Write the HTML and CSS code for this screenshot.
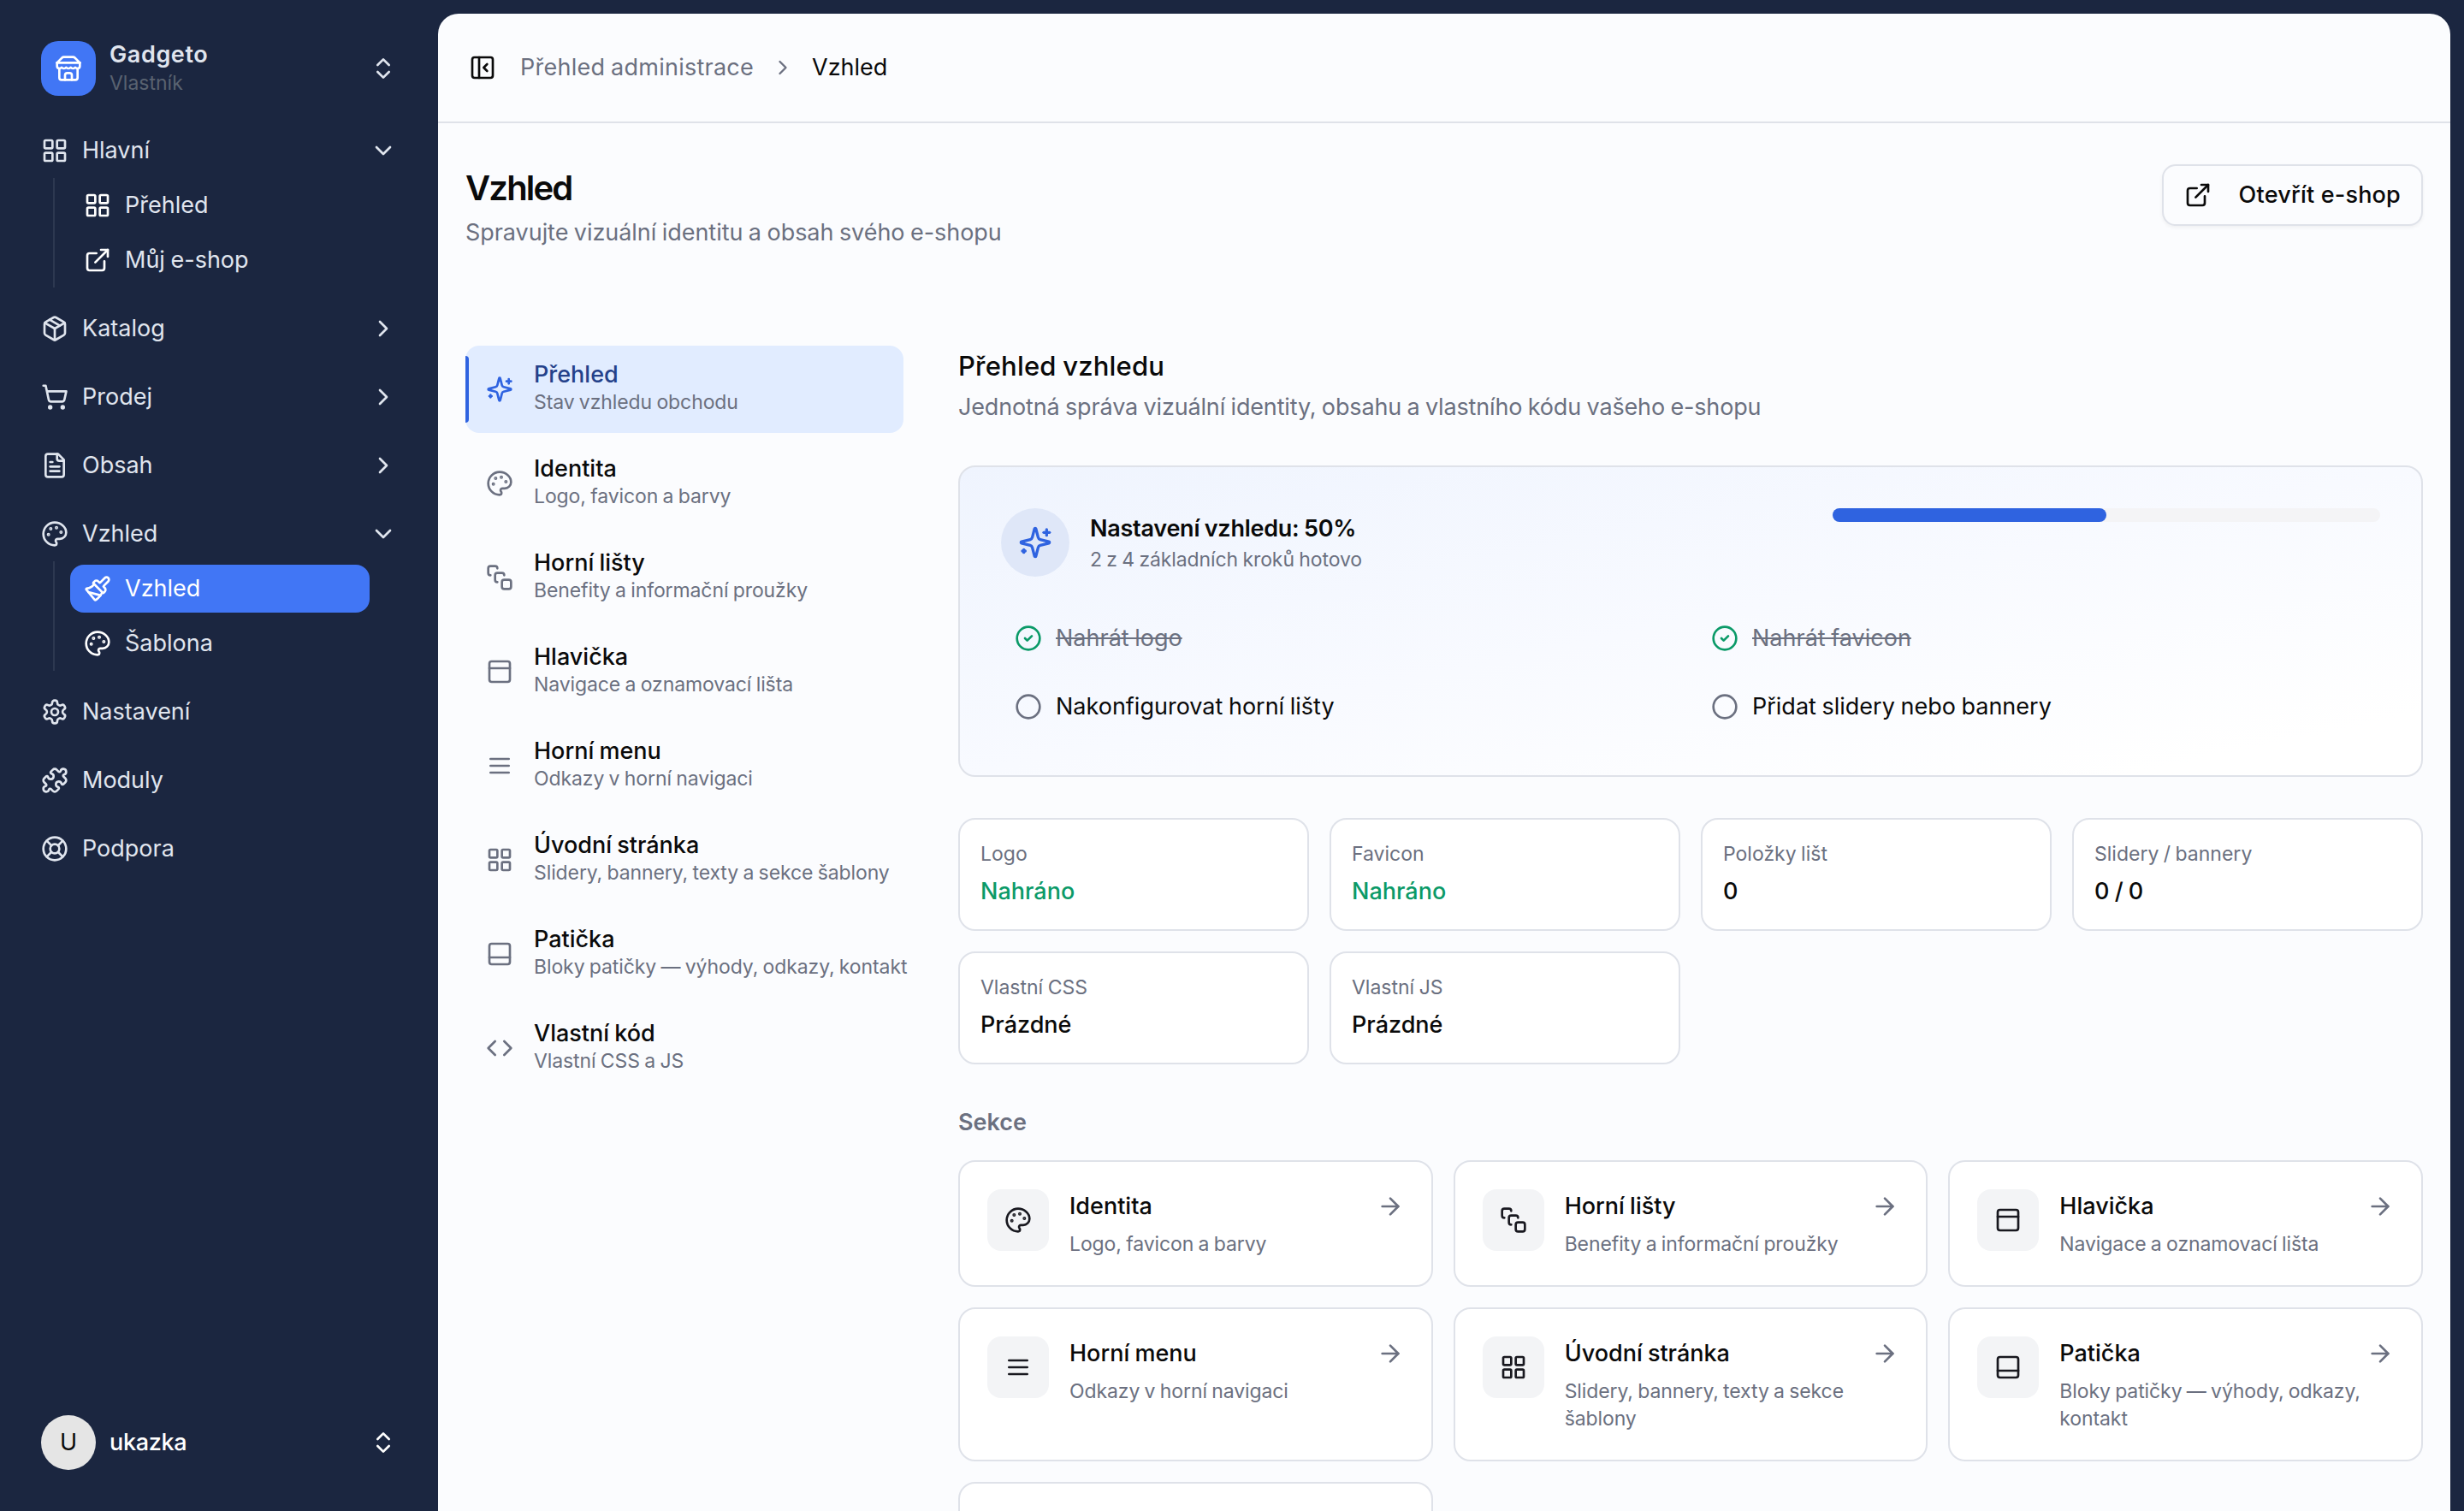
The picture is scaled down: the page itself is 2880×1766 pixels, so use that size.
FILE: index.html
```
<!DOCTYPE html>
<html lang="cs">
<head>
  <meta charset="UTF-8">
  <title>Vzhled | Gadgeto</title>
  <link rel="stylesheet" href="styles.css">
</head>
<body>

  <!-- Icon sprite -->
  <svg class="sprite" aria-hidden="true">
    <symbol id="i-store" viewBox="0 0 24 24"><path d="m2 7 4.41-4.41A2 2 0 0 1 7.83 2h8.34a2 2 0 0 1 1.42.59L22 7"/><path d="M4 12v8a2 2 0 0 0 2 2h12a2 2 0 0 0 2-2v-8"/><path d="M15 22v-4a2 2 0 0 0-2-2h-2a2 2 0 0 0-2 2v4"/><path d="M2 7h20"/><path d="M22 7v3a2 2 0 0 1-2 2a2.7 2.7 0 0 1-1.59-.63.7.7 0 0 0-.82 0A2.7 2.7 0 0 1 16 12a2.7 2.7 0 0 1-1.59-.63.7.7 0 0 0-.82 0A2.7 2.7 0 0 1 12 12a2.7 2.7 0 0 1-1.59-.63.7.7 0 0 0-.82 0A2.7 2.7 0 0 1 8 12a2.7 2.7 0 0 1-1.59-.63.7.7 0 0 0-.82 0A2.7 2.7 0 0 1 4 12a2 2 0 0 1-2-2V7"/></symbol>
    <symbol id="i-updown" viewBox="0 0 24 24"><path d="m7 15 5 5 5-5"/><path d="m7 9 5-5 5 5"/></symbol>
    <symbol id="i-down" viewBox="0 0 24 24"><path d="m6 9 6 6 6-6"/></symbol>
    <symbol id="i-right" viewBox="0 0 24 24"><path d="m9 18 6-6-6-6"/></symbol>
    <symbol id="i-arrow" viewBox="0 0 24 24"><path d="M5 12h14"/><path d="m12 5 7 7-7 7"/></symbol>
    <symbol id="i-grid" viewBox="0 0 24 24"><rect width="7" height="7" x="3" y="3" rx="1"/><rect width="7" height="7" x="14" y="3" rx="1"/><rect width="7" height="7" x="14" y="14" rx="1"/><rect width="7" height="7" x="3" y="14" rx="1"/></symbol>
    <symbol id="i-external" viewBox="0 0 24 24"><path d="M15 3h6v6"/><path d="M10 14 21 3"/><path d="M18 13v6a2 2 0 0 1-2 2H5a2 2 0 0 1-2-2V8a2 2 0 0 1 2-2h6"/></symbol>
    <symbol id="i-package" viewBox="0 0 24 24"><path d="M11 21.73a2 2 0 0 0 2 0l7-4A2 2 0 0 0 21 16V8a2 2 0 0 0-1-1.73l-7-4a2 2 0 0 0-2 0l-7 4A2 2 0 0 0 3 8v8a2 2 0 0 0 1 1.73z"/><path d="M12 22V12"/><path d="M3.3 7 12 12l8.7-5"/><path d="m7.5 4.27 9 5.15"/></symbol>
    <symbol id="i-cart" viewBox="0 0 24 24"><circle cx="8" cy="21" r="1"/><circle cx="19" cy="21" r="1"/><path d="M2.05 2.05h2l2.66 12.42a2 2 0 0 0 2 1.58h9.78a2 2 0 0 0 1.95-1.57l1.65-7.43H5.12"/></symbol>
    <symbol id="i-file" viewBox="0 0 24 24"><path d="M15 2H6a2 2 0 0 0-2 2v16a2 2 0 0 0 2 2h12a2 2 0 0 0 2-2V7Z"/><path d="M14 2v4a2 2 0 0 0 2 2h4"/><path d="M10 9H8"/><path d="M16 13H8"/><path d="M16 17H8"/></symbol>
    <symbol id="i-palette" viewBox="0 0 24 24"><circle class="dot" cx="13.5" cy="6.5" r=".5"/><circle class="dot" cx="17.5" cy="10.5" r=".5"/><circle class="dot" cx="8.5" cy="7.5" r=".5"/><circle class="dot" cx="6.5" cy="12.5" r=".5"/><path d="M12 2C6.5 2 2 6.5 2 12s4.5 10 10 10c.926 0 1.648-.746 1.648-1.688 0-.437-.18-.835-.437-1.125-.29-.289-.438-.652-.438-1.125a1.64 1.64 0 0 1 1.668-1.668h1.996c3.051 0 5.555-2.503 5.555-5.554C21.965 6.012 17.461 2 12 2z"/></symbol>
    <symbol id="i-brush" viewBox="0 0 24 24"><path d="m14.622 17.897-10.68-2.913"/><path d="M18.376 2.622a1 1 0 1 1 3.002 3.002L17.36 9.643a.5.5 0 0 0 0 .707l.944.944a2.41 2.41 0 0 1 0 3.408l-.944.944a.5.5 0 0 1-.707 0L8.354 7.348a.5.5 0 0 1 0-.707l.944-.944a2.41 2.41 0 0 1 3.408 0l.944.944a.5.5 0 0 0 .707 0z"/><path d="M9 8c-1.804 2.71-3.97 3.46-6.583 3.948a.507.507 0 0 0-.302.819l7.32 8.883a1 1 0 0 0 1.185.204C12.735 20.405 16 16.792 16 15"/></symbol>
    <symbol id="i-settings" viewBox="0 0 24 24"><path d="M12.22 2h-.44a2 2 0 0 0-2 2v.18a2 2 0 0 1-1 1.73l-.43.25a2 2 0 0 1-2 0l-.15-.08a2 2 0 0 0-2.73.73l-.22.38a2 2 0 0 0 .73 2.73l.15.1a2 2 0 0 1 1 1.72v.51a2 2 0 0 1-1 1.74l-.15.09a2 2 0 0 0-.73 2.73l.22.38a2 2 0 0 0 2.73.73l.15-.08a2 2 0 0 1 2 0l.43.25a2 2 0 0 1 1 1.73V20a2 2 0 0 0 2 2h.44a2 2 0 0 0 2-2v-.18a2 2 0 0 1 1-1.73l.43-.25a2 2 0 0 1 2 0l.15.08a2 2 0 0 0 2.73-.73l.22-.39a2 2 0 0 0-.73-2.73l-.15-.08a2 2 0 0 1-1-1.74v-.5a2 2 0 0 1 1-1.74l.15-.09a2 2 0 0 0 .73-2.73l-.22-.38a2 2 0 0 0-2.73-.73l-.15.08a2 2 0 0 1-2 0l-.43-.25a2 2 0 0 1-1-1.73V4a2 2 0 0 0-2-2z"/><circle cx="12" cy="12" r="3"/></symbol>
    <symbol id="i-puzzle" viewBox="0 0 24 24"><path d="M15.39 4.39a1 1 0 0 0 1.68-.474 2.5 2.5 0 1 1 3.014 3.015 1 1 0 0 0-.474 1.68l1.683 1.682a2.414 2.414 0 0 1 0 3.414L19.61 15.39a1 1 0 0 1-1.68-.474 2.5 2.5 0 1 0-3.014 3.015 1 1 0 0 1 .474 1.68l-1.683 1.682a2.414 2.414 0 0 1-3.414 0L8.61 19.61a1 1 0 0 0-1.68.474 2.5 2.5 0 1 1-3.014-3.015 1 1 0 0 0 .474-1.68l-1.683-1.682a2.414 2.414 0 0 1 0-3.414L4.39 8.61a1 1 0 0 1 1.68.474 2.5 2.5 0 1 0 3.014-3.015 1 1 0 0 1-.474-1.68l1.683-1.682a2.414 2.414 0 0 1 3.414 0z"/></symbol>
    <symbol id="i-buoy" viewBox="0 0 24 24"><circle cx="12" cy="12" r="10"/><path d="m4.93 4.93 4.24 4.24"/><path d="m14.83 9.17 4.24-4.24"/><path d="m14.83 14.83 4.24 4.24"/><path d="m9.17 14.83-4.24 4.24"/><circle cx="12" cy="12" r="4"/></symbol>
    <symbol id="i-panel-left" viewBox="0 0 24 24"><rect width="18" height="18" x="3" y="3" rx="2"/><path d="M9 3v18"/><path d="m16 15-3-3 3-3"/></symbol>
    <symbol id="i-sparkles" viewBox="0 0 24 24"><path d="M9.937 15.5A2 2 0 0 0 8.5 14.063l-6.135-1.582a.5.5 0 0 1 0-.962L8.5 9.936A2 2 0 0 0 9.937 8.5l1.582-6.135a.5.5 0 0 1 .963 0L14.063 8.5A2 2 0 0 0 15.5 9.937l6.135 1.581a.5.5 0 0 1 0 .964L15.5 14.063a2 2 0 0 0-1.437 1.437l-1.582 6.135a.5.5 0 0 1-.963 0z"/><path d="M20 3v4"/><path d="M22 5h-4"/><path d="M4 17v2"/><path d="M5 18H3"/></symbol>
    <symbol id="i-stack" viewBox="0 0 24 24"><path d="M4 10c-1.1 0-2-.9-2-2V4c0-1.1.9-2 2-2h4c1.1 0 2 .9 2 2"/><path d="M10 16c-1.1 0-2-.9-2-2v-4c0-1.1.9-2 2-2h4c1.1 0 2 .9 2 2"/><rect width="8" height="8" x="14" y="14" rx="2"/></symbol>
    <symbol id="i-panel-top" viewBox="0 0 24 24"><rect width="18" height="18" x="3" y="3" rx="2"/><path d="M3 9h18"/></symbol>
    <symbol id="i-panel-bottom" viewBox="0 0 24 24"><rect width="18" height="18" x="3" y="3" rx="2"/><path d="M3 15h18"/></symbol>
    <symbol id="i-menu" viewBox="0 0 24 24"><path d="M4 6h16"/><path d="M4 12h16"/><path d="M4 18h16"/></symbol>
    <symbol id="i-code" viewBox="0 0 24 24"><path d="m16 18 6-6-6-6"/><path d="m8 6-6 6 6 6"/></symbol>
    <symbol id="i-check" viewBox="0 0 24 24"><circle cx="12" cy="12" r="10"/><path d="m9 12 2 2 4-4"/></symbol>
    <symbol id="i-circle" viewBox="0 0 24 24"><circle cx="12" cy="12" r="10"/></symbol>
  </svg>

  <div class="app">

    <!-- Sidebar -->
    <aside class="sidebar">
      <div class="shop-switch">
        <span class="shop-logo"><svg class="icon"><use href="#i-store"/></svg></span>
        <div class="shop-info">
          <div class="shop-name">Gadgeto</div>
          <div class="shop-role">Vlastník</div>
        </div>
        <svg class="icon"><use href="#i-updown"/></svg>
      </div>

      <nav class="nav">
        <div class="nav-group">
          <a class="nav-item"><svg class="icon"><use href="#i-grid"/></svg><span>Hlavní</span><svg class="icon"><use href="#i-down"/></svg></a>
          <div class="nav-sub">
            <a class="sub-item"><svg class="icon"><use href="#i-grid"/></svg>Přehled</a>
            <a class="sub-item"><svg class="icon"><use href="#i-external"/></svg>Můj e-shop</a>
          </div>
        </div>
        <a class="nav-item"><svg class="icon"><use href="#i-package"/></svg><span>Katalog</span><svg class="icon"><use href="#i-right"/></svg></a>
        <a class="nav-item"><svg class="icon"><use href="#i-cart"/></svg><span>Prodej</span><svg class="icon"><use href="#i-right"/></svg></a>
        <a class="nav-item"><svg class="icon"><use href="#i-file"/></svg><span>Obsah</span><svg class="icon"><use href="#i-right"/></svg></a>
        <div class="nav-group">
          <a class="nav-item"><svg class="icon"><use href="#i-palette"/></svg><span>Vzhled</span><svg class="icon"><use href="#i-down"/></svg></a>
          <div class="nav-sub">
            <a class="sub-item active"><svg class="icon"><use href="#i-brush"/></svg>Vzhled</a>
            <a class="sub-item"><svg class="icon"><use href="#i-palette"/></svg>Šablona</a>
          </div>
        </div>
        <a class="nav-item"><svg class="icon"><use href="#i-settings"/></svg><span>Nastavení</span></a>
        <a class="nav-item"><svg class="icon"><use href="#i-puzzle"/></svg><span>Moduly</span></a>
        <a class="nav-item"><svg class="icon"><use href="#i-buoy"/></svg><span>Podpora</span></a>
      </nav>

      <div class="user">
        <span class="avatar">U</span>
        <span class="user-name">ukazka</span>
        <svg class="icon"><use href="#i-updown"/></svg>
      </div>
    </aside>

    <!-- Main panel -->
    <main class="main">
      <header class="topbar">
        <svg class="icon"><use href="#i-panel-left"/></svg>
        <div class="breadcrumb">
          <span class="crumb">Přehled administrace</span>
          <svg class="icon small"><use href="#i-right"/></svg>
          <span>Vzhled</span>
        </div>
      </header>

      <div class="page-head">
        <div>
          <h1>Vzhled</h1>
          <p class="lead">Spravujte vizuální identitu a obsah svého e-shopu</p>
        </div>
        <button class="btn"><svg class="icon"><use href="#i-external"/></svg>Otevřít e-shop</button>
      </div>

      <div class="columns">
        <nav class="tabs">
          <a class="tab active"><svg class="icon"><use href="#i-sparkles"/></svg><div><div class="tab-title">Přehled</div><div class="tab-desc">Stav vzhledu obchodu</div></div></a>
          <a class="tab"><svg class="icon"><use href="#i-palette"/></svg><div><div class="tab-title">Identita</div><div class="tab-desc">Logo, favicon a barvy</div></div></a>
          <a class="tab"><svg class="icon"><use href="#i-stack"/></svg><div><div class="tab-title">Horní lišty</div><div class="tab-desc">Benefity a informační proužky</div></div></a>
          <a class="tab"><svg class="icon"><use href="#i-panel-top"/></svg><div><div class="tab-title">Hlavička</div><div class="tab-desc">Navigace a oznamovací lišta</div></div></a>
          <a class="tab"><svg class="icon"><use href="#i-menu"/></svg><div><div class="tab-title">Horní menu</div><div class="tab-desc">Odkazy v horní navigaci</div></div></a>
          <a class="tab"><svg class="icon"><use href="#i-grid"/></svg><div><div class="tab-title">Úvodní stránka</div><div class="tab-desc">Slidery, bannery, texty a sekce šablony</div></div></a>
          <a class="tab"><svg class="icon"><use href="#i-panel-bottom"/></svg><div><div class="tab-title">Patička</div><div class="tab-desc">Bloky patičky — výhody, odkazy, kontakt</div></div></a>
          <a class="tab"><svg class="icon"><use href="#i-code"/></svg><div><div class="tab-title">Vlastní kód</div><div class="tab-desc">Vlastní CSS a JS</div></div></a>
        </nav>

        <section class="content">
          <h2>Přehled vzhledu</h2>
          <p class="lead content-lead">Jednotná správa vizuální identity, obsahu a vlastního kódu vašeho e-shopu</p>

          <!-- Setup progress -->
          <div class="setup">
            <div class="setup-head">
              <span class="setup-icon"><svg class="icon large"><use href="#i-sparkles"/></svg></span>
              <div class="setup-text">
                <div class="setup-title">Nastavení vzhledu: 50%</div>
                <div class="setup-desc">2 z 4 základních kroků hotovo</div>
              </div>
              <div class="progress"><div class="progress-bar" style="width: 50%"></div></div>
            </div>
            <div class="steps">
              <div class="step done"><svg class="icon"><use href="#i-check"/></svg><span>Nahrát logo</span></div>
              <div class="step done"><svg class="icon"><use href="#i-check"/></svg><span>Nahrát favicon</span></div>
              <div class="step"><svg class="icon"><use href="#i-circle"/></svg><span>Nakonfigurovat horní lišty</span></div>
              <div class="step"><svg class="icon"><use href="#i-circle"/></svg><span>Přidat slidery nebo bannery</span></div>
            </div>
          </div>

          <!-- Stats -->
          <div class="stats">
            <div class="stat"><div class="stat-label">Logo</div><div class="stat-value ok">Nahráno</div></div>
            <div class="stat"><div class="stat-label">Favicon</div><div class="stat-value ok">Nahráno</div></div>
            <div class="stat"><div class="stat-label">Položky lišt</div><div class="stat-value">0</div></div>
            <div class="stat"><div class="stat-label">Slidery / bannery</div><div class="stat-value">0 / 0</div></div>
            <div class="stat"><div class="stat-label">Vlastní CSS</div><div class="stat-value">Prázdné</div></div>
            <div class="stat"><div class="stat-label">Vlastní JS</div><div class="stat-value">Prázdné</div></div>
          </div>

          <!-- Sections -->
          <h3>Sekce</h3>
          <div class="cards">
            <a class="card">
              <span class="card-icon"><svg class="icon"><use href="#i-palette"/></svg></span>
              <div class="card-body">
                <div class="card-title">Identita<svg class="icon"><use href="#i-arrow"/></svg></div>
                <div class="card-desc">Logo, favicon a barvy</div>
              </div>
            </a>
            <a class="card">
              <span class="card-icon"><svg class="icon"><use href="#i-stack"/></svg></span>
              <div class="card-body">
                <div class="card-title">Horní lišty<svg class="icon"><use href="#i-arrow"/></svg></div>
                <div class="card-desc">Benefity a informační proužky</div>
              </div>
            </a>
            <a class="card">
              <span class="card-icon"><svg class="icon"><use href="#i-panel-top"/></svg></span>
              <div class="card-body">
                <div class="card-title">Hlavička<svg class="icon"><use href="#i-arrow"/></svg></div>
                <div class="card-desc">Navigace a oznamovací lišta</div>
              </div>
            </a>
            <a class="card">
              <span class="card-icon"><svg class="icon"><use href="#i-menu"/></svg></span>
              <div class="card-body">
                <div class="card-title">Horní menu<svg class="icon"><use href="#i-arrow"/></svg></div>
                <div class="card-desc">Odkazy v horní navigaci</div>
              </div>
            </a>
            <a class="card">
              <span class="card-icon"><svg class="icon"><use href="#i-grid"/></svg></span>
              <div class="card-body">
                <div class="card-title">Úvodní stránka<svg class="icon"><use href="#i-arrow"/></svg></div>
                <div class="card-desc">Slidery, bannery, texty a sekce šablony</div>
              </div>
            </a>
            <a class="card">
              <span class="card-icon"><svg class="icon"><use href="#i-panel-bottom"/></svg></span>
              <div class="card-body">
                <div class="card-title">Patička<svg class="icon"><use href="#i-arrow"/></svg></div>
                <div class="card-desc">Bloky patičky — výhody, odkazy, kontakt</div>
              </div>
            </a>
            <a class="card"></a>
          </div>
        </section>
      </div>
    </main>
  </div>

</body>
</html>
```
FILE: styles.css
```
* {
  box-sizing: border-box;
}
body {
  margin: 0;
  font-family: Inter, "Liberation Sans", sans-serif;
  font-size: 27px;
  line-height: 40px;
  word-spacing: -1px;
  color: #0a0a0a;
  background-color: #1b2640;
}
h1, h2, h3, p {
  margin: 0;
}
.sprite {
  display: none;
}
.icon {
  width: 32px;
  height: 32px;
  flex-shrink: 0;
  fill: none;
  stroke: currentColor;
  stroke-width: 2;
  stroke-linecap: round;
  stroke-linejoin: round;
}
.icon.small {
  width: 28px;
  height: 28px;
}
.icon.large {
  width: 40px;
  height: 40px;
}
.dot {
  fill: currentColor;
}
.app {
  display: flex;
  height: 1766px;
  overflow: hidden;
}

/* Sidebar */
.sidebar {
  display: flex;
  flex-direction: column;
  width: 512px;
  flex-shrink: 0;
  padding: 48px;
  color: #e0e5ee;
}
.shop-switch,
.user {
  display: flex;
  align-items: center;
  gap: 16px;
  height: 64px;
}
.shop-logo {
  display: flex;
  align-items: center;
  justify-content: center;
  width: 64px;
  height: 64px;
  border-radius: 20px;
  color: white;
  background-color: #4176f5;
}
.shop-info,
.user-name {
  flex: 1;
}
.shop-name {
  font-weight: 600;
  line-height: 34px;
  letter-spacing: 0.6px;
}
.shop-role {
  font-size: 23px;
  line-height: 32px;
  color: #596270;
}
.nav {
  display: flex;
  flex-direction: column;
  gap: 16px;
  flex: 1;
  padding-top: 32px;
}
.nav-item {
  display: flex;
  align-items: center;
  gap: 16px;
  height: 64px;
}
.nav-item span {
  flex: 1;
}
.nav-sub {
  display: flex;
  flex-direction: column;
  gap: 8px;
  margin: 0 32px 0 14px;
  padding: 4px 0 4px 18px;
  border-left: 2px solid #2d3850;
}
.sub-item {
  display: flex;
  align-items: center;
  gap: 16px;
  height: 56px;
  padding: 0 16px;
  border-radius: 16px;
}
.sub-item .icon {
  color: white;
}
.sub-item.active {
  color: white;
  background-color: #4176f5;
}
.user {
  color: white;
}
.avatar {
  width: 64px;
  height: 64px;
  border-radius: 50%;
  line-height: 64px;
  text-align: center;
  color: #0a0a0a;
  background-color: #e5e5e5;
}
.user-name {
  font-weight: 500;
  letter-spacing: -0.3px;
}

/* Main panel */
.main {
  flex: 1;
  margin: 16px 16px 0 0;
  border-radius: 24px 24px 0 0;
  background-color: #fbfcfe;
  overflow: hidden;
}
.topbar {
  display: flex;
  align-items: center;
  gap: 28px;
  height: 128px;
  padding: 0 36px;
  border-bottom: 2px solid #dfe2e9;
}
.breadcrumb {
  display: flex;
  align-items: center;
  gap: 20px;
}
.breadcrumb .icon {
  color: #6b7080;
}
.crumb {
  color: #6b7080;
  letter-spacing: 0.25px;
}
.page-head {
  display: flex;
  align-items: flex-start;
  justify-content: space-between;
  padding: 48px 32px 0;
  height: 260px;
}
h1 {
  font-size: 40px;
  line-height: 56px;
  font-weight: 600;
  letter-spacing: -1.8px;
}
.lead {
  color: #6b7080;
  letter-spacing: -0.05px;
  line-height: 48px;
}
.btn {
  display: flex;
  align-items: center;
  gap: 32px;
  height: 72px;
  padding: 0 24px;
  border: 2px solid #dfe2e9;
  border-radius: 16px;
  font: inherit;
  font-weight: 500;
  letter-spacing: 0.2px;
  color: #0a0a0a;
  background-color: #fbfcfe;
  box-shadow: 0 2px 4px rgba(0, 0, 0, 0.05);
}
.columns {
  display: flex;
  gap: 64px;
  padding: 0 32px;
}

/* Tabs */
.tabs {
  display: flex;
  flex-direction: column;
  gap: 8px;
  width: 512px;
  flex-shrink: 0;
}
.tab {
  position: relative;
  display: flex;
  align-items: center;
  gap: 24px;
  height: 102px;
  padding: 0 24px;
  border-radius: 16px;
  white-space: nowrap;
}
.tab .icon {
  color: #6b7080;
}
.tab-title {
  font-weight: 500;
  line-height: 36px;
}
.tab-desc {
  margin-bottom: 6px;
  font-size: 23px;
  line-height: 28px;
  letter-spacing: -0.1px;
  color: #6b7080;
}
.tab.active {
  background-color: #e1ecff;
}
.tab.active::before {
  content: "";
  position: absolute;
  left: 0;
  top: 12px;
  bottom: 12px;
  width: 4px;
  border-radius: 0 4px 4px 0;
  background-color: #2f63e0;
}
.tab.active .icon {
  color: #2f63e0;
}
.tab.active .tab-title {
  color: #24418a;
}

/* Content */
.content {
  flex: 1;
}
h2 {
  font-size: 31px;
  line-height: 48px;
  font-weight: 500;
  letter-spacing: 0.2px;
}
.content-lead {
  margin-bottom: 44px;
  letter-spacing: -0.15px;
}
.setup {
  padding: 48px;
  border: 2px solid #dfe2e9;
  border-radius: 20px;
  background-image: linear-gradient(to bottom right, #eff4fe, #f8faff 50%, white 90%);
}
.setup-head {
  display: flex;
  align-items: flex-start;
  gap: 24px;
}
.setup-icon {
  display: flex;
  align-items: center;
  justify-content: center;
  width: 80px;
  height: 80px;
  border-radius: 50%;
  color: #2f63e0;
  background-color: #dfe7f8;
}
.setup-text {
  flex: 1;
  padding-top: 4px;
}
.setup-title {
  font-weight: 600;
  letter-spacing: -0.25px;
}
.setup-desc {
  font-size: 23px;
  line-height: 32px;
  letter-spacing: -0.1px;
  color: #6b7080;
}
.progress {
  width: 640px;
  height: 16px;
  border-radius: 8px;
  background-color: #f4f4f6;
}
.progress-bar {
  height: 16px;
  border-radius: 8px;
  background-color: #2f63e0;
}
.steps {
  display: grid;
  grid-template-columns: 1fr 1fr;
  gap: 16px;
  margin-top: 40px;
}
.step {
  display: flex;
  align-items: center;
  gap: 16px;
  height: 64px;
  padding: 0 16px;
}
.step .icon {
  color: #6b7080;
}
.step.done {
  color: #6b7080;
  text-decoration: line-through;
}
.step.done .icon {
  color: #0b9a68;
}
.stats {
  display: grid;
  grid-template-columns: repeat(4, 1fr);
  gap: 24px;
  margin-top: 48px;
}
.stat {
  height: 132px;
  padding: 24px;
  border: 2px solid #dfe2e9;
  border-radius: 20px;
  background-color: white;
}
.stat-label {
  font-size: 23px;
  line-height: 32px;
  color: #6b7080;
}
.stat-value {
  margin-top: 8px;
  font-weight: 500;
}
.stat-value.ok {
  color: #0b9a68;
}
h3 {
  margin: 48px 0 24px;
  font-size: 27px;
  font-weight: 600;
  color: #6b7080;
}
.cards {
  display: grid;
  grid-template-columns: repeat(3, 1fr);
  gap: 24px;
}
.card {
  display: flex;
  align-items: flex-start;
  gap: 24px;
  min-height: 148px;
  padding: 32px;
  border: 2px solid #dfe2e9;
  border-radius: 20px;
  background-color: white;
}
.card-icon {
  display: flex;
  align-items: center;
  justify-content: center;
  width: 72px;
  height: 72px;
  flex-shrink: 0;
  border-radius: 16px;
  color: #18181f;
  background-color: #f3f4f6;
}
.card-body {
  flex: 1;
}
.card-title {
  display: flex;
  align-items: center;
  justify-content: space-between;
  font-weight: 500;
}
.card-title .icon {
  color: #6b7080;
}
.card-desc {
  margin-top: 8px;
  font-size: 23px;
  line-height: 32px;
  letter-spacing: -0.1px;
  color: #6b7080;
}
```
